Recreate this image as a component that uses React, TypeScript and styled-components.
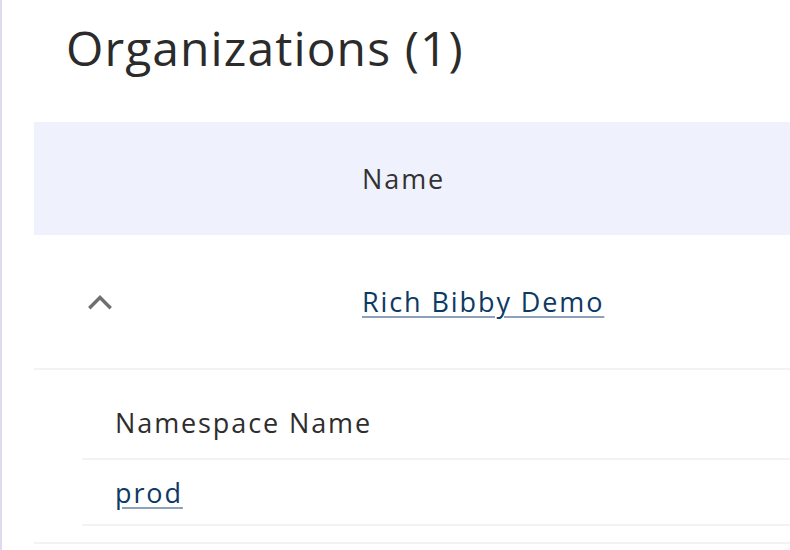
import styled, { createGlobalStyle } from "styled-components";

const GlobalStyle = createGlobalStyle`
  html, body {
    margin: 0;
    padding: 0;
    background: #ffffff;
    overflow: hidden;
  }
  body {
    font-family: "Open Sans", "Noto Sans", sans-serif;
    color: #2e2e2e;
  }
`;

const Page = styled.div`
  min-height: 550px;
  border-left: 2px solid #dcdcef;
  padding-left: 32px;
  box-sizing: border-box;
`;

const Title = styled.h1`
  margin: 0;
  padding: 16px 0 0 32px;
  height: 122px;
  box-sizing: border-box;
  font-size: 48px;
  font-weight: 400;
  line-height: 64px;
  letter-spacing: 1.1px;
  color: #2b2b2b;
`;

const Table = styled.div`
  width: 100%;
`;

const HeaderRow = styled.div`
  display: grid;
  grid-template-columns: 328px 1fr;
  align-items: center;
  height: 113px;
  background: #eff2fd;
`;

const HeaderCell = styled.div`
  font-size: 27px;
  letter-spacing: 1.9px;
  color: #333333;
`;

const Row = styled.div`
  display: grid;
  grid-template-columns: 328px 1fr;
  align-items: center;
  height: 133px;
  border-bottom: 2px solid #f3f3f3;
`;

const ToggleCell = styled.div`
  padding-left: 54px;
  display: flex;
  align-items: center;
`;

const Toggle = styled.button`
  border: none;
  background: none;
  padding: 0;
  width: 24px;
  height: 16px;
  cursor: pointer;
  display: flex;
`;

const Link = styled.a`
  font-size: 27px;
  letter-spacing: 1.9px;
  color: #0d3a64;
  text-decoration: underline;
  text-decoration-color: #8da1ba;
  text-underline-offset: 4px;
  text-decoration-thickness: 2px;
`;

const Expanded = styled.div`
  padding: 16px 0 16px 48px;
  border-bottom: 2px solid #f3f3f3;
`;

const SubHeader = styled.div<{ height: number }>`
  height: ${({ height }) => height}px;
  display: flex;
  align-items: center;
  padding-left: 33px;
  border-bottom: 2px solid #f3f3f3;
  font-size: 27px;
  letter-spacing: 1.9px;
  color: #2e2e2e;
`;

const ChevronUp = () => (
  <svg width="24" height="16" viewBox="0 0 24 16">
    <polyline
      points="2.5,13 12,3.5 21.5,13"
      fill="none"
      stroke="#707070"
      strokeWidth="3.4"
      strokeLinecap="square"
    />
  </svg>
);

const namespaces = ["prod"];

const App = () => (
  <>
    <GlobalStyle />
    <Page>
      <Title>Organizations (1)</Title>
      <Table>
        <HeaderRow>
          <div />
          <HeaderCell>Name</HeaderCell>
        </HeaderRow>
        <Row>
          <ToggleCell>
            <Toggle aria-label="collapse">
              <ChevronUp />
            </Toggle>
          </ToggleCell>
          <div>
            <Link href="#">Rich Bibby Demo</Link>
          </div>
        </Row>
        <Expanded>
          <SubHeader height={72}>Namespace Name</SubHeader>
          {namespaces.map((ns) => (
            <SubHeader key={ns} height={64}>
              <Link href="#">{ns}</Link>
            </SubHeader>
          ))}
        </Expanded>
      </Table>
    </Page>
  </>
);

export default App;
